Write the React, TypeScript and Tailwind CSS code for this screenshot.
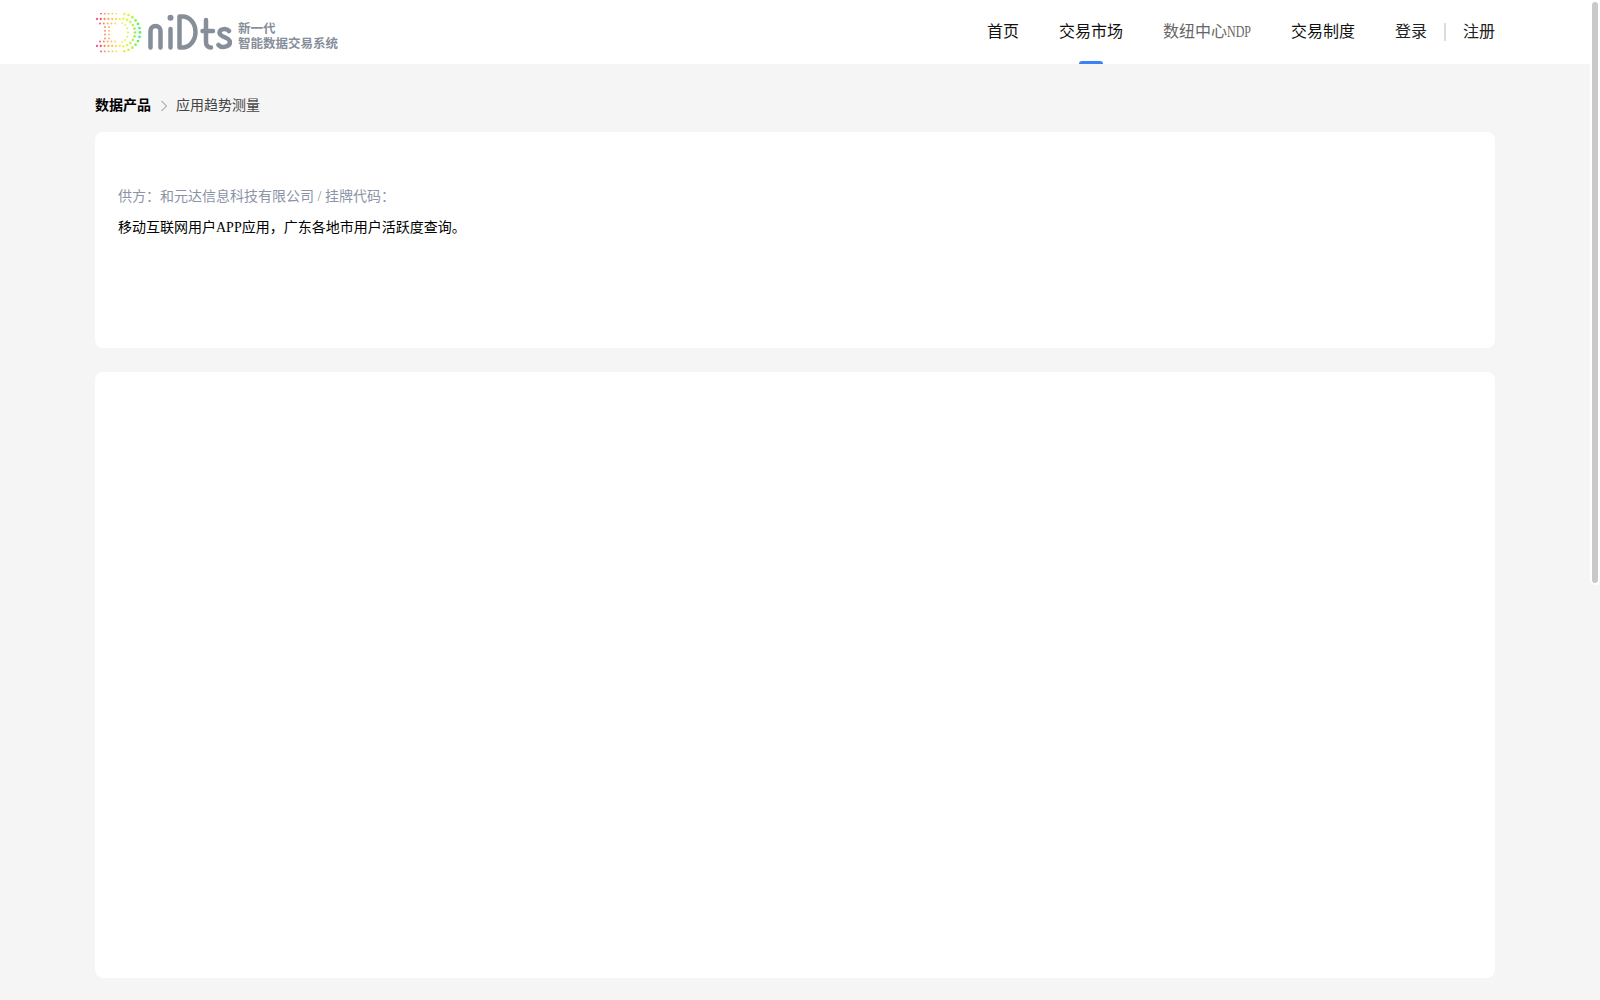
import React from 'react';

const cjk = "font-['Liberation_Serif','Noto_Sans_CJK_SC',serif]";

// logo dots go pink -> orange -> yellow -> green from left to right
const stops = [
  [2, 340],
  [6, 355],
  [10, 385],
  [20, 410],
  [30, 425],
  [38, 445],
  [45, 490],
];

const dotColor = (x: number) => {
  let hue = stops[stops.length - 1][1];
  for (let i = 0; i < stops.length - 1; i++) {
    const [x0, h0] = stops[i];
    const [x1, h1] = stops[i + 1];
    if (x <= x0) {
      hue = h0;
      break;
    }
    if (x <= x1) {
      hue = h0 + ((x - x0) / (x1 - x0)) * (h1 - h0);
      break;
    }
  }
  return `hsl(${hue % 360}, 88%, 65%)`;
};

const buildDots = () => {
  const dots: { x: number; y: number; r: number }[] = [];
  const cx = 26;
  const cy = 19.5;
  // straight rows: [y, first x, last x]
  const rows = [
    [0.6, 6, 25],
    [6, 2, 25],
    [10.5, 5, 23],
    [28.5, 5, 23],
    [33, 2, 25],
    [38.4, 6, 25],
  ];
  rows.forEach(([y, from, to]) => {
    for (let x = from; x <= to; x += 3.8) dots.push({ x, y, r: from === 2 ? 1.15 : 0.95 });
  });
  // three arcs of the D
  [
    { rx: 19, ry: 19, r: 1.4, n: 6 },
    { rx: 14, ry: 14, r: 1.3, n: 5 },
    { rx: 7, ry: 9.500, r: 1, n: 3 },
  ].forEach(({ rx, ry, r, n }) => {
    for (let i = -n; i <= n; i++) {
      const a = ((i * 80) / n) * (Math.PI / 180);
      dots.push({ x: cx + rx * Math.cos(a), y: cy + ry * Math.sin(a), r });
    }
  });
  // inner stem
  for (let y = 14; y <= 26; y += 3.8) {
    dots.push({ x: 10, y, r: 1 });
    dots.push({ x: 14, y, r: 0.9 });
  }
  return dots;
};

const Logo = () => (
  <div className="flex items-center">
    <svg width="47" height="40" viewBox="0 0 47 40" className="mt-[1px]">
      {buildDots().map((d, i) => (
        <circle key={i} cx={d.x} cy={d.y} r={d.r} fill={dotColor(d.x)} />
      ))}
    </svg>
    <svg width="84" height="37" viewBox="0 0 84 37" className="ml-[6px] mt-[1px]" fill="none" stroke="#868e9a" strokeWidth="4.500" strokeLinecap="round" strokeLinejoin="round">
      <path d="M2.500 33.500V17a5 5 0 0 1 10 0v16.500" />
      <path d="M22.500 15v18.500" />
      <circle cx="22.500" cy="3.800" r="3" fill="#868e9a" stroke="none" />
      <path d="M31.500 2.500h3a13 15.500 0 0 1 0 31h-3z" />
      <path d="M58 6v22a5 5 0 0 0 5 5.500M54.500 17H65" />
      <path d="M81 17c-2-2.500-9-3-9.500 1.500s10.500 5 10.500 9.500-8 7-11.500 3" />
    </svg>
    <div className="ml-[6px] mt-[6px] flex flex-col text-[12.5px] leading-[15px] font-bold text-[#868e9a] font-['Noto_Sans_CJK_SC',sans-serif]">
      <span>新一代</span>
      <span>智能数据交易系统</span>
    </div>
  </div>
);

const NavItem = ({ label, active, muted, suffix }: { label: string; active?: boolean; muted?: boolean; suffix?: string }) => (
  <a className={`relative flex h-16 items-center text-base ${muted ? 'text-[#666666]' : 'text-[#111111]'}`}>
    {label}
    {/* the latin part is set in a tall, narrow face in the original */}
    {suffix && (
      <span className="inline-block w-6 origin-left scale-x-75 whitespace-nowrap">{suffix}</span>
    )}
    {active && (
      <span className="absolute bottom-0 left-1/2 h-[3px] w-6 -translate-x-1/2 rounded-t-sm bg-[#3b82f6]"></span>
    )}
  </a>
);

const App: React.FC = () => {
  return (
    <div className={`relative h-[1000px] overflow-hidden bg-[#f5f5f5] ${cjk}`}>
      {/* Header */}
      <header className="h-16 bg-white">
        <div className="w-[1400px] h-full ml-[95px] flex items-center justify-between">
          <Logo />
          <nav className="flex items-center gap-10">
            <NavItem label="首页" />
            <NavItem label="交易市场" active />
            <NavItem label="数纽中心" suffix="NDP" muted />
            <NavItem label="交易制度" />
            <div className="flex items-center text-base text-[#222222]">
              <span>登录</span>
              <span className="mx-[17px] h-[18px] w-[2px] bg-[#dddddd]"></span>
              <span>注册</span>
            </div>
          </nav>
        </div>
      </header>

      <main className="w-[1400px] ml-[95px]">
        {/* Breadcrumb */}
        <div className="h-[68px] pt-4 flex items-center text-sm text-[#444444]">
          <span className="font-bold text-black">数据产品</span>
          <svg width="16" height="16" viewBox="0 0 16 16" fill="none" stroke="#888888" strokeWidth="1" className="ml-[5px] mr-[4px]">
            <path d="M5.500 3l5 5-5 5" />
          </svg>
          <span>应用趋势测量</span>
        </div>

        {/* Product info */}
        <section className="h-[216px] rounded-lg bg-white px-[23px] pt-[54px]">
          <p className="text-sm leading-[22px] text-[#8a94a6]">供方：和元达信息科技有限公司 / 挂牌代码：</p>
          <p className="mt-[9px] text-sm leading-[22px] text-black">移动互联网用户APP应用，广东各地市用户活跃度查询。</p>
        </section>

        {/* Empty detail panel */}
        <section className="mt-6 h-[606px] rounded-lg bg-white"></section>
      </main>

      {/* Scrollbar thumb, lies over the page */}
      <div className="absolute top-0 right-0 h-[585px] w-[10px] rounded-[5px] bg-white p-[2px]">
        <div className="h-full w-full rounded-[3px] bg-[#c9c9c9]"></div>
      </div>
    </div>
  );
};

export default App;
